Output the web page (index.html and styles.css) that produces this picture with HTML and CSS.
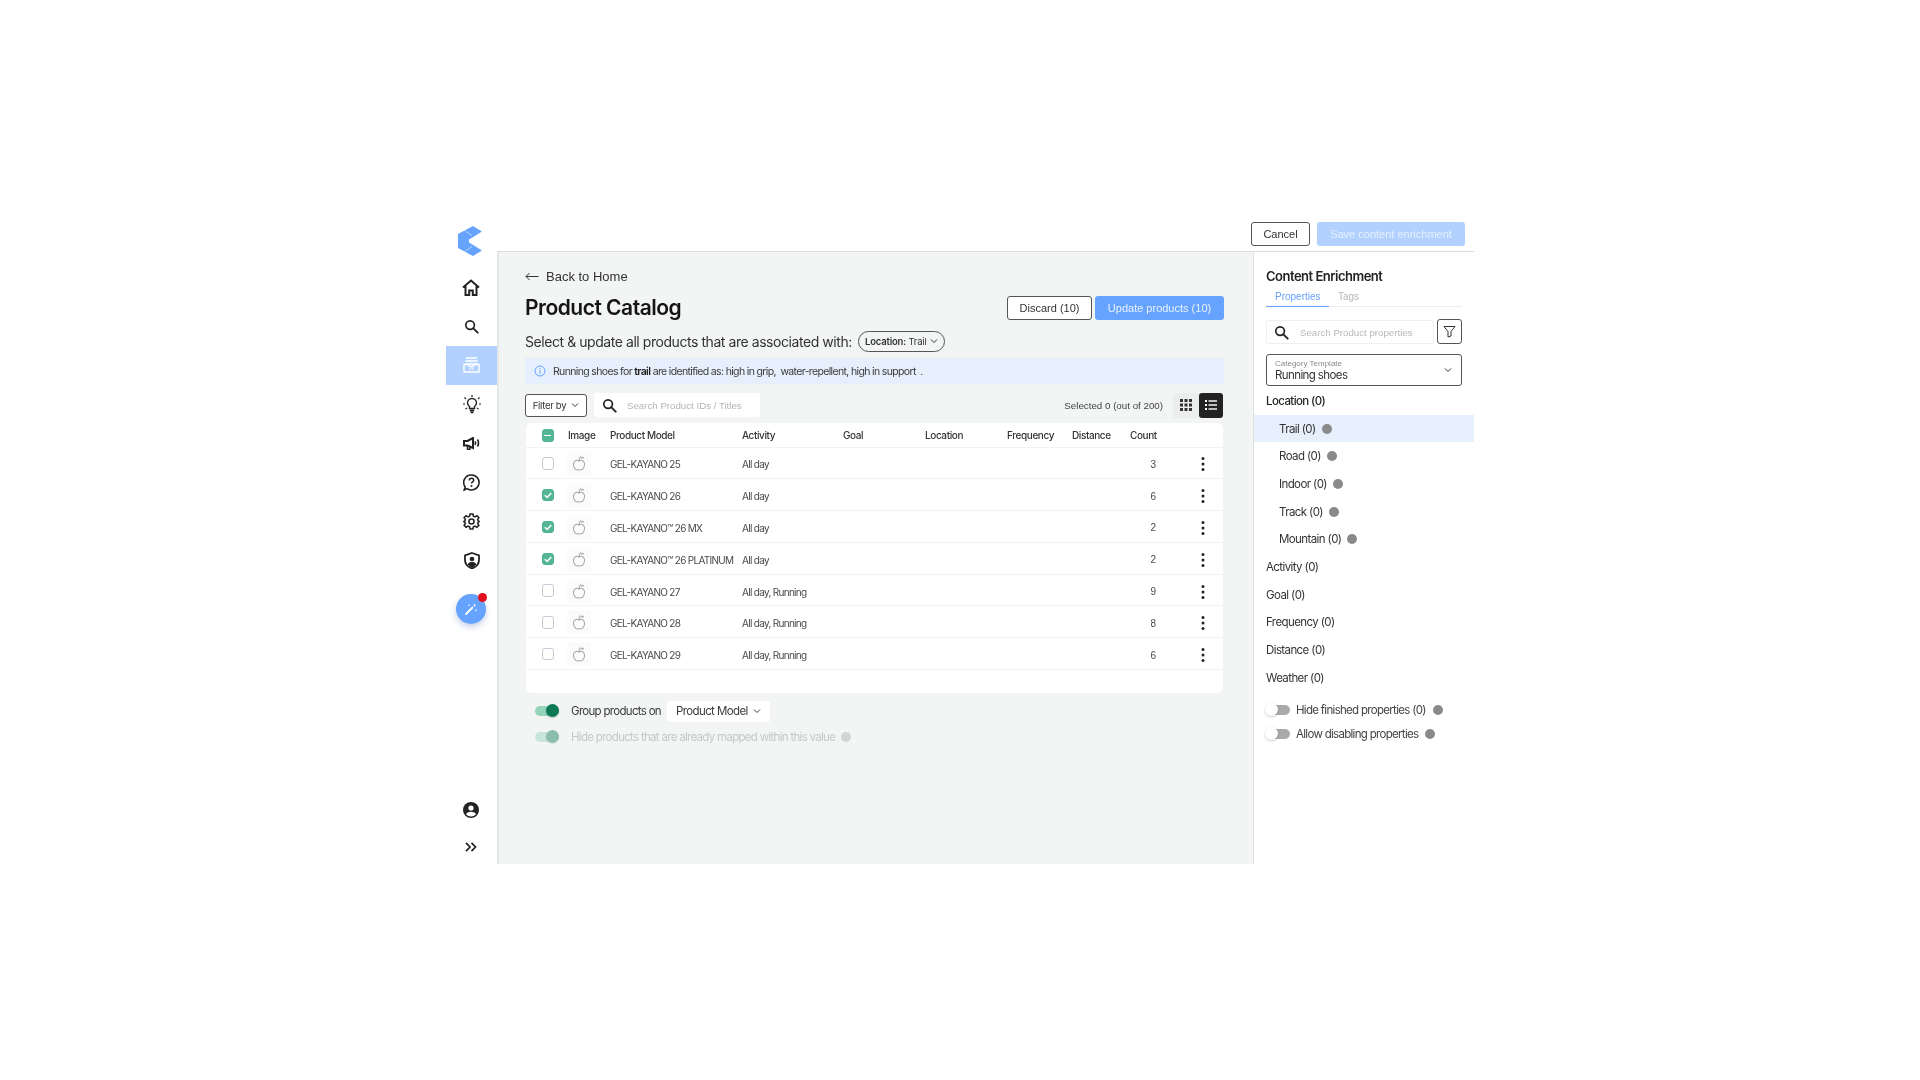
FILE: index.html
```html
<!DOCTYPE html>
<html lang="en">
<head>
<meta charset="utf-8">
<title>Product Catalog</title>
<link rel="stylesheet" href="styles.css">
</head>
<body>
<svg class="defs" width="0" height="0" aria-hidden="true">
  <defs>
    <symbol id="i-search" viewBox="0 0 16 16"><circle cx="6.5" cy="6.5" r="4.6" fill="none" stroke="currentColor" stroke-width="1.8"/><path d="M10 10l4.6 4.6" fill="none" stroke="currentColor" stroke-width="2" stroke-linecap="round"/></symbol>
    <symbol id="i-chev" viewBox="0 0 8 6"><path d="M1 1.5l3 3 3-3" fill="none" stroke="currentColor" stroke-width="1"/></symbol>
    <symbol id="i-apple" viewBox="0 0 14 16"><path d="M7 6C5.500 4.800 2 5 1.500 8.500 1 12 3.500 15 5.500 15c.7 0 1-.3 1.500-.3s.8.3 1.500.3c2 0 4.500-3 4-6.500C12 5 8.500 4.800 7 6z" fill="none" stroke="currentColor" stroke-width="1.100"/><path d="M7 6C7 4 7.500 2.500 9 1.500" fill="none" stroke="currentColor" stroke-width="1.100"/><path d="M9 2.500c1-.7 2-.9 3-.6-.2 1-1.200 1.700-3 1.600z" fill="currentColor"/></symbol>
    <symbol id="i-kebab" viewBox="0 0 4 14"><circle cx="2" cy="1.600" r="1.500"/><circle cx="2" cy="7" r="1.500"/><circle cx="2" cy="12.400" r="1.500"/></symbol>
    <symbol id="i-check" viewBox="0 0 12 12"><path d="M2.800 6.200l2.300 2.300 4.200-4.600" fill="none" stroke="#fff" stroke-width="1.500"/></symbol>
  </defs>
</svg>
<div class="frame">
  <nav class="side">
    <div class="logo">
      <svg width="24" height="30" viewBox="0 0 24 30"><path d="M15 0l9 5.500-8 5-5 3v3l5 3 8 5-9 5.500L0 22V8z" fill="#66a3ff"/><path d="M6.500 4.500l7.500 5M6.500 25.500l7.500-5" stroke="#fff" stroke-width=".5"/></svg>
    </div>
    <div class="nav-item shift"><svg width="18" height="17" viewBox="0 0 18 17"><path d="M1 8.500l8-7 8 7M3.500 6.500V16h3.700v-4.500h3.600V16h3.700V6.500" fill="none" stroke="#222" stroke-width="2"/></svg></div>
    <div class="nav-item"><svg class="ink" width="15" height="15"><use href="#i-search"/></svg></div>
    <div class="nav-item active"><svg width="17" height="16" viewBox="0 0 17 16"><path d="M3 1h11M2.500 4h12M2 7h13M1 7.500h4.500l1.500 2h3l1.500-2H16V15H1z" fill="none" stroke="#fff" stroke-width="1.300"/><path d="M6 13l2.500-2 2.500 2" fill="none" stroke="#fff"/></svg></div>
    <div class="nav-item"><svg width="20" height="20" viewBox="0 0 20 20"><path d="M10 1v2M2.500 3.500L4 5M17.500 3.500L16 5M1 10h2M17 10h2M3.500 15L5 14M16.500 15L15 14" stroke="#222" stroke-width="1.200" fill="none"/><path d="M7.500 14.500v-2C6 11.500 5.500 10 5.500 9A4.500 4.500 0 0 1 14.500 9c0 1-.5 2.500-2 3.500v2z" fill="none" stroke="#222" stroke-width="1.400"/><path d="M7.800 16.300h4.400M8.500 18.300h3" stroke="#222" stroke-width="1.800"/></svg></div>
    <div class="nav-item"><svg width="17" height="13" viewBox="0 0 17 13"><path d="M1 4h3.500L10 1v10L4.500 8.500H1z" fill="none" stroke="#222" stroke-width="2"/><path d="M4.500 9v3.500h2.300V10M12 4.300c.7 1.200.7 2.400 0 3.600M14.500 2.500c1.300 2.300 1.300 4.700 0 7" fill="none" stroke="#222" stroke-width="1.600"/></svg></div>
    <div class="nav-item"><svg width="17" height="17" viewBox="0 0 17 17"><path d="M8.500 1a7.500 7.500 0 1 1-4.300 13.600L1.200 16l1-3A7.500 7.500 0 0 1 8.500 1z" fill="none" stroke="#222" stroke-width="1.600"/><path d="M6.300 6.500C6.300 5 7.300 4.200 8.500 4.200s2.200.8 2.200 2c0 1.600-2.200 1.700-2.200 3.300" fill="none" stroke="#222" stroke-width="1.500"/><circle cx="8.500" cy="12" r="1" fill="#222"/></svg></div>
    <div class="nav-item"><svg width="17" height="17" viewBox="0 0 24 24"><path d="M10 1.500h4l.7 3 2.300 1 2.600-1.700 2.800 2.800L20.700 9.200l1 2.300 2 .5v0l-2 .5-1 2.300 1.700 2.600-2.800 2.800-2.600-1.700-2.300 1-.7 3h-4l-.7-3-2.300-1-2.600 1.700-2.800-2.800 1.700-2.600-1-2.300-2-.5v0l2-.5 1-2.300-1.700-2.600 2.800-2.800L7 5.500l2.300-1z" fill="none" stroke="#222" stroke-width="2.200"/><circle cx="12" cy="12" r="3.600" fill="none" stroke="#222" stroke-width="2.200"/></svg></div>
    <div class="nav-item"><svg width="16" height="17" viewBox="0 0 16 17"><path d="M8 1l7 2.500V8c0 4-3 7-7 8.500C4 15 1 12 1 8V3.500z" fill="none" stroke="#222" stroke-width="1.800"/><circle cx="8" cy="7" r="2.300" fill="#222"/><path d="M3.500 12.500c1-2 2.800-2.500 4.500-2.500s3.500.5 4.500 2.500L8 16z" fill="#222"/></svg></div>
    <div class="wand-wrap">
      <div class="wand">
        <svg width="14" height="14" viewBox="0 0 14 14"><path d="M2 12l6.500-6.500" stroke="#fff" stroke-width="1.800" stroke-linecap="round"/><path d="M10.500 2v2.500M9.300 3.200h2.500M12 7.500v1.600M11.200 8.300h1.600M5 2.500v1.500M4.300 3.200h1.500" stroke="#fff" stroke-width=".8"/></svg>
        <span class="dot"></span>
      </div>
    </div>
    <div class="side-foot">
      <div class="nav-foot"><svg width="16" height="16" viewBox="0 0 16 16"><circle cx="8" cy="8" r="8" fill="#222"/><circle cx="8" cy="6" r="2.600" fill="#fff"/><path d="M3 12.300c1-1.800 3-2.500 5-2.500s4 .7 5 2.500A6.500 6.500 0 0 1 8 14.500a6.500 6.500 0 0 1-5-2.200z" fill="#fff"/></svg></div>
      <div class="nav-foot"><svg width="12" height="10" viewBox="0 0 12 10"><path d="M1 .8L5 5 1 9.200M6.500 .8L10.500 5l-4 4.200" fill="none" stroke="#222" stroke-width="1.700"/></svg></div>
    </div>
  </nav>
  <div class="content">
    <header class="topbar">
      <button class="btn outline">Cancel</button>
      <button class="btn save">Save content enrichment</button>
    </header>
    <div class="panes">
      <main class="main">
        <div class="back"><svg width="14" height="9" viewBox="0 0 14 9"><path d="M13.500 4.500H1M4.500 1L1 4.500 4.500 8" fill="none" stroke="#333" stroke-width="1"/></svg><span>Back to Home</span></div>
        <div class="title-row">
          <h1>Product Catalog</h1>
          <div class="actions">
            <button class="btn outline discard">Discard (10)</button>
            <button class="btn update">Update products (10)</button>
          </div>
        </div>
        <div class="sub-row">
          <span class="sub">Select &amp; update all products that are associated with:</span>
          <span class="pill"><span><b>Location:</b> Trail</span> <svg width="8" height="6"><use href="#i-chev"/></svg></span>
        </div>
        <div class="info-bar">
          <svg width="12" height="12" viewBox="0 0 12 12"><circle cx="6" cy="6" r="5" fill="none" stroke="#66a3ff"/><path d="M6 5.200v3.500M6 3v1.200" stroke="#66a3ff"/></svg>
          <span>Running shoes for <b>trail</b> are identified as: high in grip, &nbsp;water-repellent, high in support &nbsp;.</span>
        </div>
        <div class="filter-row">
          <button class="filter-btn">Filter by <svg width="8" height="6"><use href="#i-chev"/></svg></button>
          <div class="search"><svg class="ink" width="15" height="15"><use href="#i-search"/></svg><span>Search Product IDs / Titles</span></div>
          <span class="selected">Selected 0 (out of 200)</span>
          <div class="view-toggle">
            <span class="view"><svg width="12" height="12" viewBox="0 0 12 12" fill="#333"><rect width="3" height="3"/><rect x="4.500" width="3" height="3"/><rect x="9" width="3" height="3"/><rect y="4.500" width="3" height="3"/><rect x="4.500" y="4.500" width="3" height="3"/><rect x="9" y="4.500" width="3" height="3"/><rect y="9" width="3" height="3"/><rect x="4.500" y="9" width="3" height="3"/><rect x="9" y="9" width="3" height="3"/></svg></span>
            <span class="view on"><svg width="12" height="10" viewBox="0 0 12 10" fill="#fff"><rect width="2" height="2"/><rect x="3.500" y=".3" width="8.500" height="1.400"/><rect y="4" width="2" height="2"/><rect x="3.500" y="4.300" width="8.500" height="1.400"/><rect y="8" width="2" height="2"/><rect x="3.500" y="8.300" width="8.500" height="1.400"/></svg></span>
          </div>
        </div>
        <section class="card">
          <div class="row head">
            <span class="box minus"><i></i></span><span>Image</span><span>Product Model</span><span>Activity</span><span>Goal</span><span>Location</span><span>Frequency</span><span>Distance</span><span>Count</span><span></span>
          </div>
          <div class="row">
            <span class="box"></span><span class="thumb"><svg width="14" height="16"><use href="#i-apple"/></svg></span><span>GEL-KAYANO 25</span><span>All day</span><span></span><span></span><span></span><span></span><span class="count">3</span><svg class="kebab" width="4" height="14"><use href="#i-kebab"/></svg>
          </div>
          <div class="row">
            <span class="box on"><svg width="12" height="12"><use href="#i-check"/></svg></span><span class="thumb"><svg width="14" height="16"><use href="#i-apple"/></svg></span><span>GEL-KAYANO 26</span><span>All day</span><span></span><span></span><span></span><span></span><span class="count">6</span><svg class="kebab" width="4" height="14"><use href="#i-kebab"/></svg>
          </div>
          <div class="row">
            <span class="box on"><svg width="12" height="12"><use href="#i-check"/></svg></span><span class="thumb"><svg width="14" height="16"><use href="#i-apple"/></svg></span><span>GEL-KAYANO™ 26 MX</span><span>All day</span><span></span><span></span><span></span><span></span><span class="count">2</span><svg class="kebab" width="4" height="14"><use href="#i-kebab"/></svg>
          </div>
          <div class="row">
            <span class="box on"><svg width="12" height="12"><use href="#i-check"/></svg></span><span class="thumb"><svg width="14" height="16"><use href="#i-apple"/></svg></span><span>GEL-KAYANO™ 26 PLATINUM</span><span>All day</span><span></span><span></span><span></span><span></span><span class="count">2</span><svg class="kebab" width="4" height="14"><use href="#i-kebab"/></svg>
          </div>
          <div class="row">
            <span class="box"></span><span class="thumb"><svg width="14" height="16"><use href="#i-apple"/></svg></span><span>GEL-KAYANO 27</span><span>All day, Running</span><span></span><span></span><span></span><span></span><span class="count">9</span><svg class="kebab" width="4" height="14"><use href="#i-kebab"/></svg>
          </div>
          <div class="row">
            <span class="box"></span><span class="thumb"><svg width="14" height="16"><use href="#i-apple"/></svg></span><span>GEL-KAYANO 28</span><span>All day, Running</span><span></span><span></span><span></span><span></span><span class="count">8</span><svg class="kebab" width="4" height="14"><use href="#i-kebab"/></svg>
          </div>
          <div class="row">
            <span class="box"></span><span class="thumb"><svg width="14" height="16"><use href="#i-apple"/></svg></span><span>GEL-KAYANO 29</span><span>All day, Running</span><span></span><span></span><span></span><span></span><span class="count">6</span><svg class="kebab" width="4" height="14"><use href="#i-kebab"/></svg>
          </div>
        </section>
        <div class="group-row">
          <span class="switch green"><i></i></span>
          <span class="group-label">Group products on</span>
          <span class="group-select">Product Model <svg width="8" height="6"><use href="#i-chev"/></svg></span>
        </div>
        <div class="hide-row">
          <span class="switch green"><i></i></span>
          <span>Hide products that are already mapped within this value</span>
          <span class="info-dot"></span>
        </div>
      </main>
      <aside class="panel">
        <h2>Content Enrichment</h2>
        <div class="tabs"><span class="tab active">Properties</span><span class="tab">Tags</span></div>
        <div class="search-row">
          <div class="p-search"><svg class="ink" width="15" height="15"><use href="#i-search"/></svg><span>Search Product properties</span></div>
          <button class="funnel"><svg width="13" height="13" viewBox="0 0 13 13"><path d="M1 1.500h11L8 6.500V11L5 12V6.500z" fill="none" stroke="#333" stroke-width="1"/></svg></button>
        </div>
        <div class="template">
          <div><small>Category Template</small><span>Running shoes</span></div>
          <svg width="8" height="6"><use href="#i-chev"/></svg>
        </div>
        <ul class="props">
          <li class="strong">Location (0)</li>
          <li class="child sel">Trail (0) <span class="info-dot"></span></li>
          <li class="child">Road (0) <span class="info-dot"></span></li>
          <li class="child">Indoor (0) <span class="info-dot"></span></li>
          <li class="child">Track (0) <span class="info-dot"></span></li>
          <li class="child">Mountain (0) <span class="info-dot"></span></li>
          <li>Activity (0)</li>
          <li>Goal (0)</li>
          <li>Frequency (0)</li>
          <li>Distance (0)</li>
          <li>Weather (0)</li>
        </ul>
        <div class="opt first"><span class="switch gray"><i></i></span><span>Hide finished properties (0)</span><span class="info-dot"></span></div>
        <div class="opt"><span class="switch gray"><i></i></span><span>Allow disabling properties</span><span class="info-dot"></span></div>
      </aside>
    </div>
  </div>
</div>
</body>
</html>
```

FILE: styles.css
```css
* { box-sizing: border-box; }
html, body { margin: 0; height: 100%; background: #fff; }
body { padding: 220px 0 0 446px; font-family: Inter, "Liberation Sans", sans-serif; color: #333; font-size: 11px; }
.defs { position: absolute; }
.ink { color: #222; }
svg { display: block; flex: none; }
button { font: inherit; cursor: pointer; }

.frame { display: flex; width: 1028px; height: 644px; filter: blur(.35px); }

.side { width: 51px; display: flex; flex-direction: column; align-items: stretch; }
.logo { height: 47.5px; padding: 6px 0 0 12px; }
.nav-item { height: 39px; display: flex; align-items: center; justify-content: center; }
.nav-item.shift { padding-right: 2px; }
.nav-item.active { background: #b3d1ff; }
.wand-wrap { display: flex; justify-content: center; padding-top: 14.5px; padding-right: 2px; }
.wand { position: relative; width: 30px; height: 30px; border-radius: 50%; background: #66a3ff; box-shadow: 0 3px 6px rgba(60,100,180,.3); display: flex; align-items: center; justify-content: center; }
.dot { position: absolute; top: -1px; right: -1px; width: 9px; height: 9px; border-radius: 50%; background: #e0101e; }
.side-foot { margin-top: auto; margin-bottom: -1px; }
.nav-foot { height: 37px; display: flex; align-items: center; justify-content: center; padding-right: 2px; }

.content { flex: 1; display: flex; flex-direction: column; min-width: 0; }
.topbar { height: 32px; display: flex; justify-content: flex-end; gap: 7px; padding: 2px 9px 0 0; border-bottom: 1px solid #d9dbdb; }
.btn { height: 24px; padding: 0; border-radius: 3px; font-family: "Liberation Sans", sans-serif; font-size: 11px; border: 0; }
.btn.outline { width: 59px; background: #fff; border: 1.2px solid #555; color: #333; }
.btn.save { width: 148px; background: #b3d1ff; color: #e6f0ff; }
.panes { flex: 1; display: flex; min-height: 0; }

.main { width: 757px; background: #f3f5f5; border-left: 2px solid #e6e8e8; border-right: 1px solid #dfe1e1; padding: 14px 29px 0 26px; }
.back { display: flex; align-items: center; gap: 7px; height: 20px; font-family: "Liberation Sans", sans-serif; font-size: 13px; color: #333; }
.title-row { display: flex; justify-content: space-between; align-items: center; height: 32px; margin-top: 5px; }
h1 { margin: 0; font-size: 21px; font-weight: 600; color: #151515; letter-spacing: -.5px; }
.actions { display: flex; gap: 3px; padding-top: 1px; }
.btn.discard { width: 85px; }
.btn.update { width: 129px; background: #66a3ff; color: #e8f1ff; }
.sub-row { display: flex; align-items: center; gap: 6px; height: 22px; margin-top: 7px; }
.sub { font-size: 14px; letter-spacing: -.44px; color: #333; }
.pill { display: flex; align-items: center; gap: 3px; height: 21px; width: 87px; justify-content: center; border: 1.2px solid #555; border-radius: 11px; font-size: 9.5px; letter-spacing: -.2px; white-space: pre; }
.pill b { font-weight: 600; }
.info-bar { display: flex; align-items: center; gap: 7px; height: 26px; margin-top: 6px; padding-left: 9px; background: #e6effc; font-size: 10.5px; letter-spacing: -.65px; color: #3c3c3c; }
.info-bar b { font-weight: 600; color: #222; }
.filter-row { display: flex; align-items: center; height: 24px; margin-top: 9px; }
.filter-btn { width: 62px; height: 23px; display: flex; align-items: center; justify-content: center; gap: 5px; background: #fff; border: 1.2px solid #555; border-radius: 3px; font-size: 9.5px; letter-spacing: -.3px; color: #333; padding: 0; }
.search { width: 166px; height: 24px; margin-left: 7px; background: #fff; border-radius: 3px; display: flex; align-items: center; gap: 10px; padding-left: 8px; font-family: "Liberation Sans", sans-serif; font-size: 9.7px; color: #b5b5b5; }
.selected { margin-left: auto; font-family: "Liberation Sans", sans-serif; font-size: 9.75px; color: #444; }
.view-toggle { display: flex; margin-left: 10px; margin-right: 1px; }
.view { width: 26px; height: 25px; display: flex; align-items: center; justify-content: center; background: #eceeee; border-radius: 3px 0 0 3px; }
.view.on { width: 24px; background: #222; border-radius: 3px; }

.card { width: 697px; height: 270px; margin: 6px 0 0 1px; background: #fff; border-radius: 6px; }
.row { display: grid; grid-template-columns: 26.5px 42px 132px 101px 82px 82px 65px 58px 71px 4px; align-items: center; height: 31.8px; padding: 3px 0 0 15.500px; border-bottom: 1px solid #f1f2f2; font-size: 10px; letter-spacing: -.7px; color: #4a4a4a; white-space: nowrap; }
.row.head { height: 24.500px; padding-top: 1px; font-weight: 500; color: #333; letter-spacing: -.4px; }
.box { width: 12.500px; height: 12.500px; margin-top: -2px; border-radius: 3px; border: 1.2px solid #c9c9d6; display: flex; align-items: center; justify-content: center; background: #fff; }
.head .box { margin-top: 0; }
.box.on, .box.minus { background: #52b593; border-color: #52b593; }
.box.minus i { width: 7px; height: 1.500px; background: #fff; }
.thumb { width: 24px; height: 24px; margin: -2px 0 0 -1px; background: #fbfbfb; display: flex; align-items: center; justify-content: center; color: #a9a9a9; }
.count { width: 26px; text-align: right; letter-spacing: 0; font-family: "Liberation Sans", sans-serif; }
.kebab { fill: #222; }

.group-row { display: flex; align-items: center; height: 22px; margin-top: 7px; padding-left: 10px; }
.switch { position: relative; display: block; width: 24px; height: 10px; border-radius: 5px; flex: none; }
.switch i { position: absolute; top: -2px; width: 13px; height: 13px; border-radius: 50%; }
.switch.green { background: #93d4bb; }
.switch.green i { right: 0; background: #0d7a55; box-shadow: 0 1px 2px rgba(0,0,0,.2); }
.group-label { margin-left: 12px; font-size: 11.5px; letter-spacing: -.7px; color: #3c3c3c; }
.group-select { display: flex; align-items: center; justify-content: space-between; width: 103px; height: 21px; padding: 0 9px; margin-left: 6px; background: #fff; border-radius: 3px; font-size: 11.5px; letter-spacing: -.6px; color: #3c3c3c; }
.hide-row { display: flex; align-items: center; height: 22px; margin-top: 4px; padding-left: 10px; gap: 12px; font-size: 11.5px; letter-spacing: -.7px; color: #c6c8c8; }
.hide-row .switch { opacity: .45; }
.hide-row .info-dot { background: #d3d5d5; margin-left: -6px; }
.info-dot { display: inline-block; width: 10px; height: 10px; border-radius: 50%; background: #8a8a8a; flex: none; }

.panel { flex: 1; padding-top: 14px; background: #fff; min-width: 0; }
h2 { margin: 0 0 0 12px; height: 20px; line-height: 20px; font-size: 13px; font-weight: 600; color: #222; letter-spacing: -.5px; }
.tabs { display: flex; margin: 3px 12px 0; height: 18px; border-bottom: 1px solid #eee; font-family: "Liberation Sans", sans-serif; font-size: 10px; color: #b5b5b5; }
.tab { height: 18px; padding: 2px 9px 0 9px; }
.tab.active { width: 63px; color: #66a3ff; border-bottom: 1.500px solid #66a3ff; }
.search-row { display: flex; gap: 3px; margin: 12px 12px 0; }
.p-search { width: 168px; height: 24px; margin-top: 1px; display: flex; align-items: center; gap: 11px; padding-left: 7px; border: 1px solid #eee; border-radius: 3px; font-family: "Liberation Sans", sans-serif; font-size: 9.7px; color: #b8b8b8; }
.funnel { width: 25px; height: 25px; padding: 0; display: flex; align-items: center; justify-content: center; background: #fff; border: 1.2px solid #555; border-radius: 3px; }
.template { display: flex; align-items: center; justify-content: space-between; height: 32px; margin: 10px 12px 0; padding: 0 9px 0 8px; border: 1.2px solid #555; border-radius: 3px; }
.template small { display: block; font-family: "Liberation Sans", sans-serif; font-size: 8px; line-height: 9px; color: #8a8a8a; }
.template span { display: block; margin-top: 1px; font-size: 11.5px; line-height: 13px; letter-spacing: -.6px; color: #333; }
.props { list-style: none; margin: 1px 0 0; padding: 0; }
.props li { display: flex; align-items: center; gap: 6px; height: 27.7px; padding-left: 12px; font-size: 11.5px; letter-spacing: -.6px; color: #333; }
.props li.strong { font-weight: 500; color: #222; }
.props li.child { padding-left: 25px; }
.props li.sel { background: #e6effc; }
.opt { display: flex; align-items: center; height: 24px; padding-left: 12px; font-size: 11.5px; letter-spacing: -.7px; color: #444; }
.opt.first { margin-top: 6px; }
.opt .info-dot { margin-left: 7px; }
.opt > span:nth-child(2) { margin-left: 6px; }
.switch.gray { background: #aaa; }
.switch.gray i { left: -1px; top: -1.500px; background: #fff; box-shadow: 0 1px 3px rgba(0,0,0,.2); }
```
